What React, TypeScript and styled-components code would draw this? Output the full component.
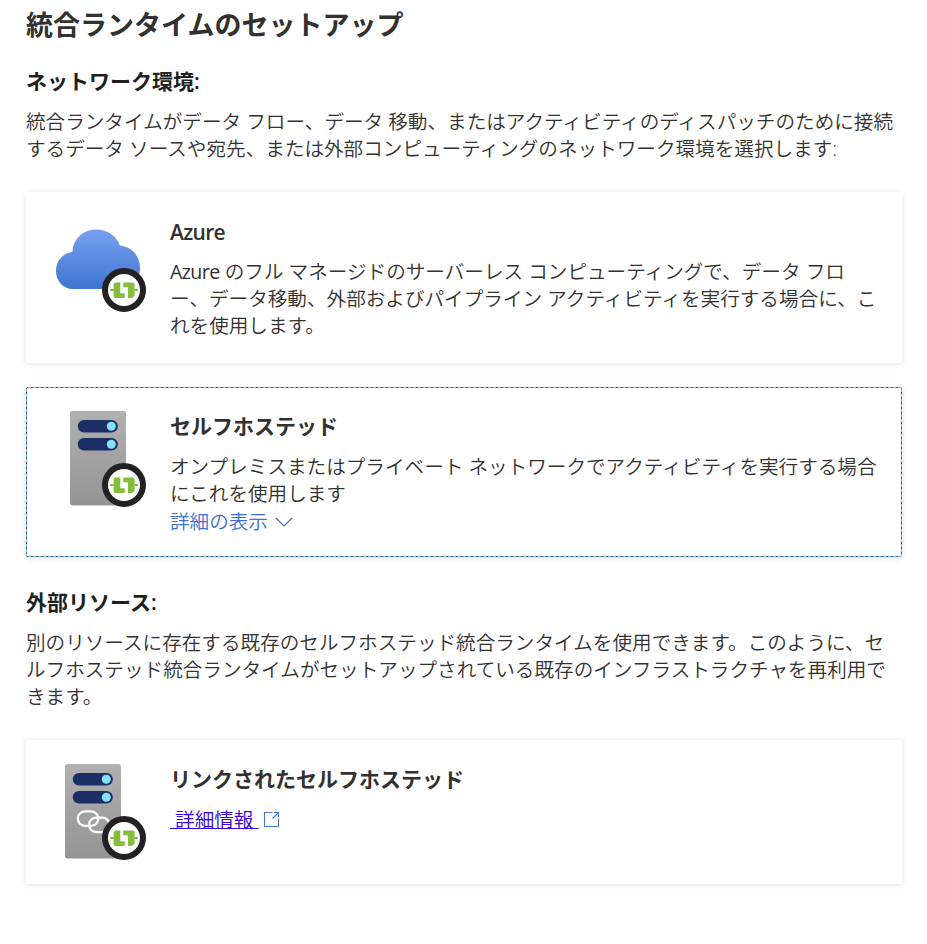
import React from 'react';
import styled, { createGlobalStyle } from 'styled-components';

const Global = createGlobalStyle`
  * { box-sizing: border-box; }
  body { margin: 0; background: #fff; color: #323130; font-family: "Open Sans", "Noto Sans CJK JP", sans-serif; }
`;

const Page = styled.main`
  display: flex;
  flex-direction: column;
  width: 927px;
  height: 944px;
  padding: 7px 25px 0 26px;
  overflow: hidden;
`;

const Title = styled.h1`
  margin: 0;
  font-size: 27px;
  line-height: 36px;
  font-weight: 600;
  white-space: nowrap;
`;

const Section = styled.section<{ $top: number; $gap: number }>`
  display: flex;
  flex-direction: column;
  margin-top: ${p => p.$top}px;
  & > p { margin-bottom: ${p => p.$gap}px; }
`;

const SectionTitle = styled.h2`
  margin: 0 0 13px;
  font-size: 21px;
  line-height: 28px;
  font-weight: 600;
  color: #201f1e;
  white-space: nowrap;
`;

const Text = styled.p`
  margin: 0;
  font-size: 19.6px;
  line-height: 27px;
  font-weight: 350;
`;

const Line = styled.span`
  display: block;
  white-space: nowrap;
`;

const Latin = styled.span`
  font-weight: 400;
  letter-spacing: -0.6px;
`;

const Card = styled.article<{ $height: number; $focused?: boolean }>`
  display: flex;
  height: ${p => p.$height}px;
  border-radius: 2px;
  background: #fff;
  box-shadow: 0 1px 6px rgba(0, 0, 0, 0.13);
  ${p => p.$focused && `
    background:
      repeating-linear-gradient(90deg, #5b5b5b 0 2px, #62b5e8 2px 5px) top / 100% 1px no-repeat,
      repeating-linear-gradient(90deg, #5b5b5b 0 2px, #62b5e8 2px 5px) bottom / 100% 1px no-repeat,
      repeating-linear-gradient(#5b5b5b 0 2px, #62b5e8 2px 5px) left / 1px 100% no-repeat,
      repeating-linear-gradient(#5b5b5b 0 2px, #62b5e8 2px 5px) right / 1px 100% no-repeat,
      #fff;
  `}
`;

const Art = styled.div<{ $top: number; $left: number }>`
  flex: none;
  width: 144px;
  padding: ${p => p.$top}px 0 0 ${p => p.$left}px;
  svg { display: block; }
`;

const Body = styled.div<{ $top: number }>`
  padding-top: ${p => p.$top}px;
`;

const CardTitle = styled.h3<{ $latin?: boolean }>`
  margin: 0 0 ${p => (p.$latin ? 12 : 13)}px;
  font-size: 21px;
  line-height: 28px;
  font-weight: 600;
  letter-spacing: ${p => (p.$latin ? '-0.7px' : 'normal')};
  white-space: nowrap;
`;

const More = styled.button`
  display: flex;
  align-items: center;
  gap: 7px;
  margin: 1px 0 0;
  padding: 0;
  border: 0;
  background: none;
  color: #3c71d0;
  font: 350 19.6px/27px "Open Sans", "Noto Sans CJK JP", sans-serif;
`;

const LinkRow = styled.div`
  display: flex;
  align-items: center;
  gap: 4px;
  font-size: 19.6px;
  line-height: 27px;
  font-weight: 350;
`;

const InfoLink = styled.a`
  color: #3700e0;
  white-space: pre;
  text-decoration: underline;
  text-decoration-thickness: 1px;
`;

/* Round runtime badge shared by the three illustrations, centred on (x, y). */
const Badge = ({ x, y }: { x: number; y: number }) => (
  <g transform={`translate(${x} ${y})`}>
    <circle r="19" fill="#fff" stroke="#222" strokeWidth="6" />
    <path
      fill="#86bc3c"
      d="M-14-1h3.600v-4.300q0-2.200 2.200-2.200h4.500V3.200H.8V8h-9q-2.200 0-2.200-2.200V1H-14z"
    />
    <path
      fill="#86bc3c"
      d="M14-1h-3.400v-4.300q0-2.200-2.200-2.200H-.8v4.800h4.700V8h3.500q3.200-.8 3.200-3.200V1H14z"
    />
  </g>
);

const CloudArt = () => (
  <svg width="92" height="84" viewBox="0 0 92 84">
    <defs>
      <linearGradient id="cloud" x1="0" y1="0" x2="0" y2="1">
        <stop stopColor="#77a0ee" /><stop offset="1" stopColor="#3f76d1" />
      </linearGradient>
    </defs>
    <path d="M18 60C8 60 1 52 1 42S8 24 17.500 23C18 10 28 .5 41 .5C53 .5 61 7 65 16.500C77 18 85 27 85 39C85 51 77 60 65 60Z" fill="url(#cloud)" />
    <Badge x={69} y={61} />
  </svg>
);

const ServerArt = ({ badgeX, linked }: { badgeX: number; linked?: boolean }) => (
  <svg width="84" height="98" viewBox="0 0 84 98">
    <defs>
      <linearGradient id={linked ? 'linked' : 'server'} x1="0" y1="0" x2="0" y2="1">
        <stop stopColor="#b1b1b1" /><stop offset="1" stopColor="#949494" />
      </linearGradient>
    </defs>
    <rect width="56" height="94.500" rx="2.500" fill={`url(#${linked ? 'linked' : 'server'})`} />
    <rect x="7.800" y="9" width="40" height="12.500" rx="6.250" fill="#1b2f66" />
    <rect x="7.800" y="27" width="40" height="12.500" rx="6.250" fill="#1b2f66" />
    <circle cx="41.300" cy="15.200" r="4.500" fill="#83e3fb" />
    <circle cx="41.300" cy="33.200" r="4.500" fill="#83e3fb" />
    {linked && (
      <g fill="none" stroke="#fff" strokeWidth="2.200">
        <rect x="12.800" y="47.300" width="20.500" height="14.500" rx="7.200" />
        <rect x="24" y="53.700" width="20.500" height="14.500" rx="7.200" />
      </g>
    )}
    <Badge x={badgeX} y={74} />
  </svg>
);

const Chevron = () => (
  <svg width="18" height="12" viewBox="0 0 18 12" fill="none" stroke="#3c71d0" strokeWidth="1.200">
    <path d="M1 2l8 8 8-8" />
  </svg>
);

const External = () => (
  <svg width="17" height="17" viewBox="0 0 17 17" fill="none" stroke="#4478ce" strokeWidth="1.100">
    <path d="M9.500 1.500h-8v14h14V7.500M11 1.500h4.500V6M15.500 1.500l-6 6" />
  </svg>
);

const Lines = ({ items }: { items: React.ReactNode[] }) => (
  <Text>{items.map((t, i) => <Line key={i}>{t}</Line>)}</Text>
);

export default function App() {
  return (
    <>
      <Global />
      <Page>
        <Title>統合ランタイムのセットアップ</Title>
        <Section $top={24} $gap={30}>
          <SectionTitle>ネットワーク環境:</SectionTitle>
          <Lines items={[
            '統合ランタイムがデータ フロー、データ 移動、またはアクティビティのディスパッチのために接続',
            'するデータ ソースや宛先、または外部コンピューティングのネットワーク環境を選択します:',
          ]} />
          <Card $height={171}>
            <Art $top={37} $left={29}><CloudArt /></Art>
            <Body $top={26}>
              <CardTitle $latin>Azure</CardTitle>
              <Lines items={[
                <><Latin>Azure</Latin> のフル マネージドのサーバーレス コンピューティングで、データ フロ</>,
                'ー、データ移動、外部およびパイプライン アクティビティを実行する場合に、こ',
                'れを使用します。',
              ]} />
            </Body>
          </Card>
        </Section>
        <Section $top={24} $gap={0}>
          <Card $height={170} $focused>
            <Art $top={24} $left={44}><ServerArt badgeX={54} /></Art>
            <Body $top={25}>
              <CardTitle>セルフホステッド</CardTitle>
              <Lines items={[
                'オンプレミスまたはプライベート ネットワークでアクティビティを実行する場合',
                'にこれを使用します',
              ]} />
              <More>詳細の表示<Chevron /></More>
            </Body>
          </Card>
        </Section>
        <Section $top={31} $gap={30}>
          <SectionTitle>外部リソース:</SectionTitle>
          <Lines items={[
            '別のリソースに存在する既存のセルフホステッド統合ランタイムを使用できます。このように、セ',
            'ルフホステッド統合ランタイムがセットアップされている既存のインフラストラクチャを再利用で',
            'きます。',
          ]} />
          <Card $height={144}>
            <Art $top={24} $left={39}><ServerArt badgeX={59} linked /></Art>
            <Body $top={25}>
              <CardTitle>リンクされたセルフホステッド</CardTitle>
              <LinkRow><InfoLink href="#">{'\u00a0詳細情報\u00a0'}</InfoLink><External /></LinkRow>
            </Body>
          </Card>
        </Section>
      </Page>
    </>
  );
}
